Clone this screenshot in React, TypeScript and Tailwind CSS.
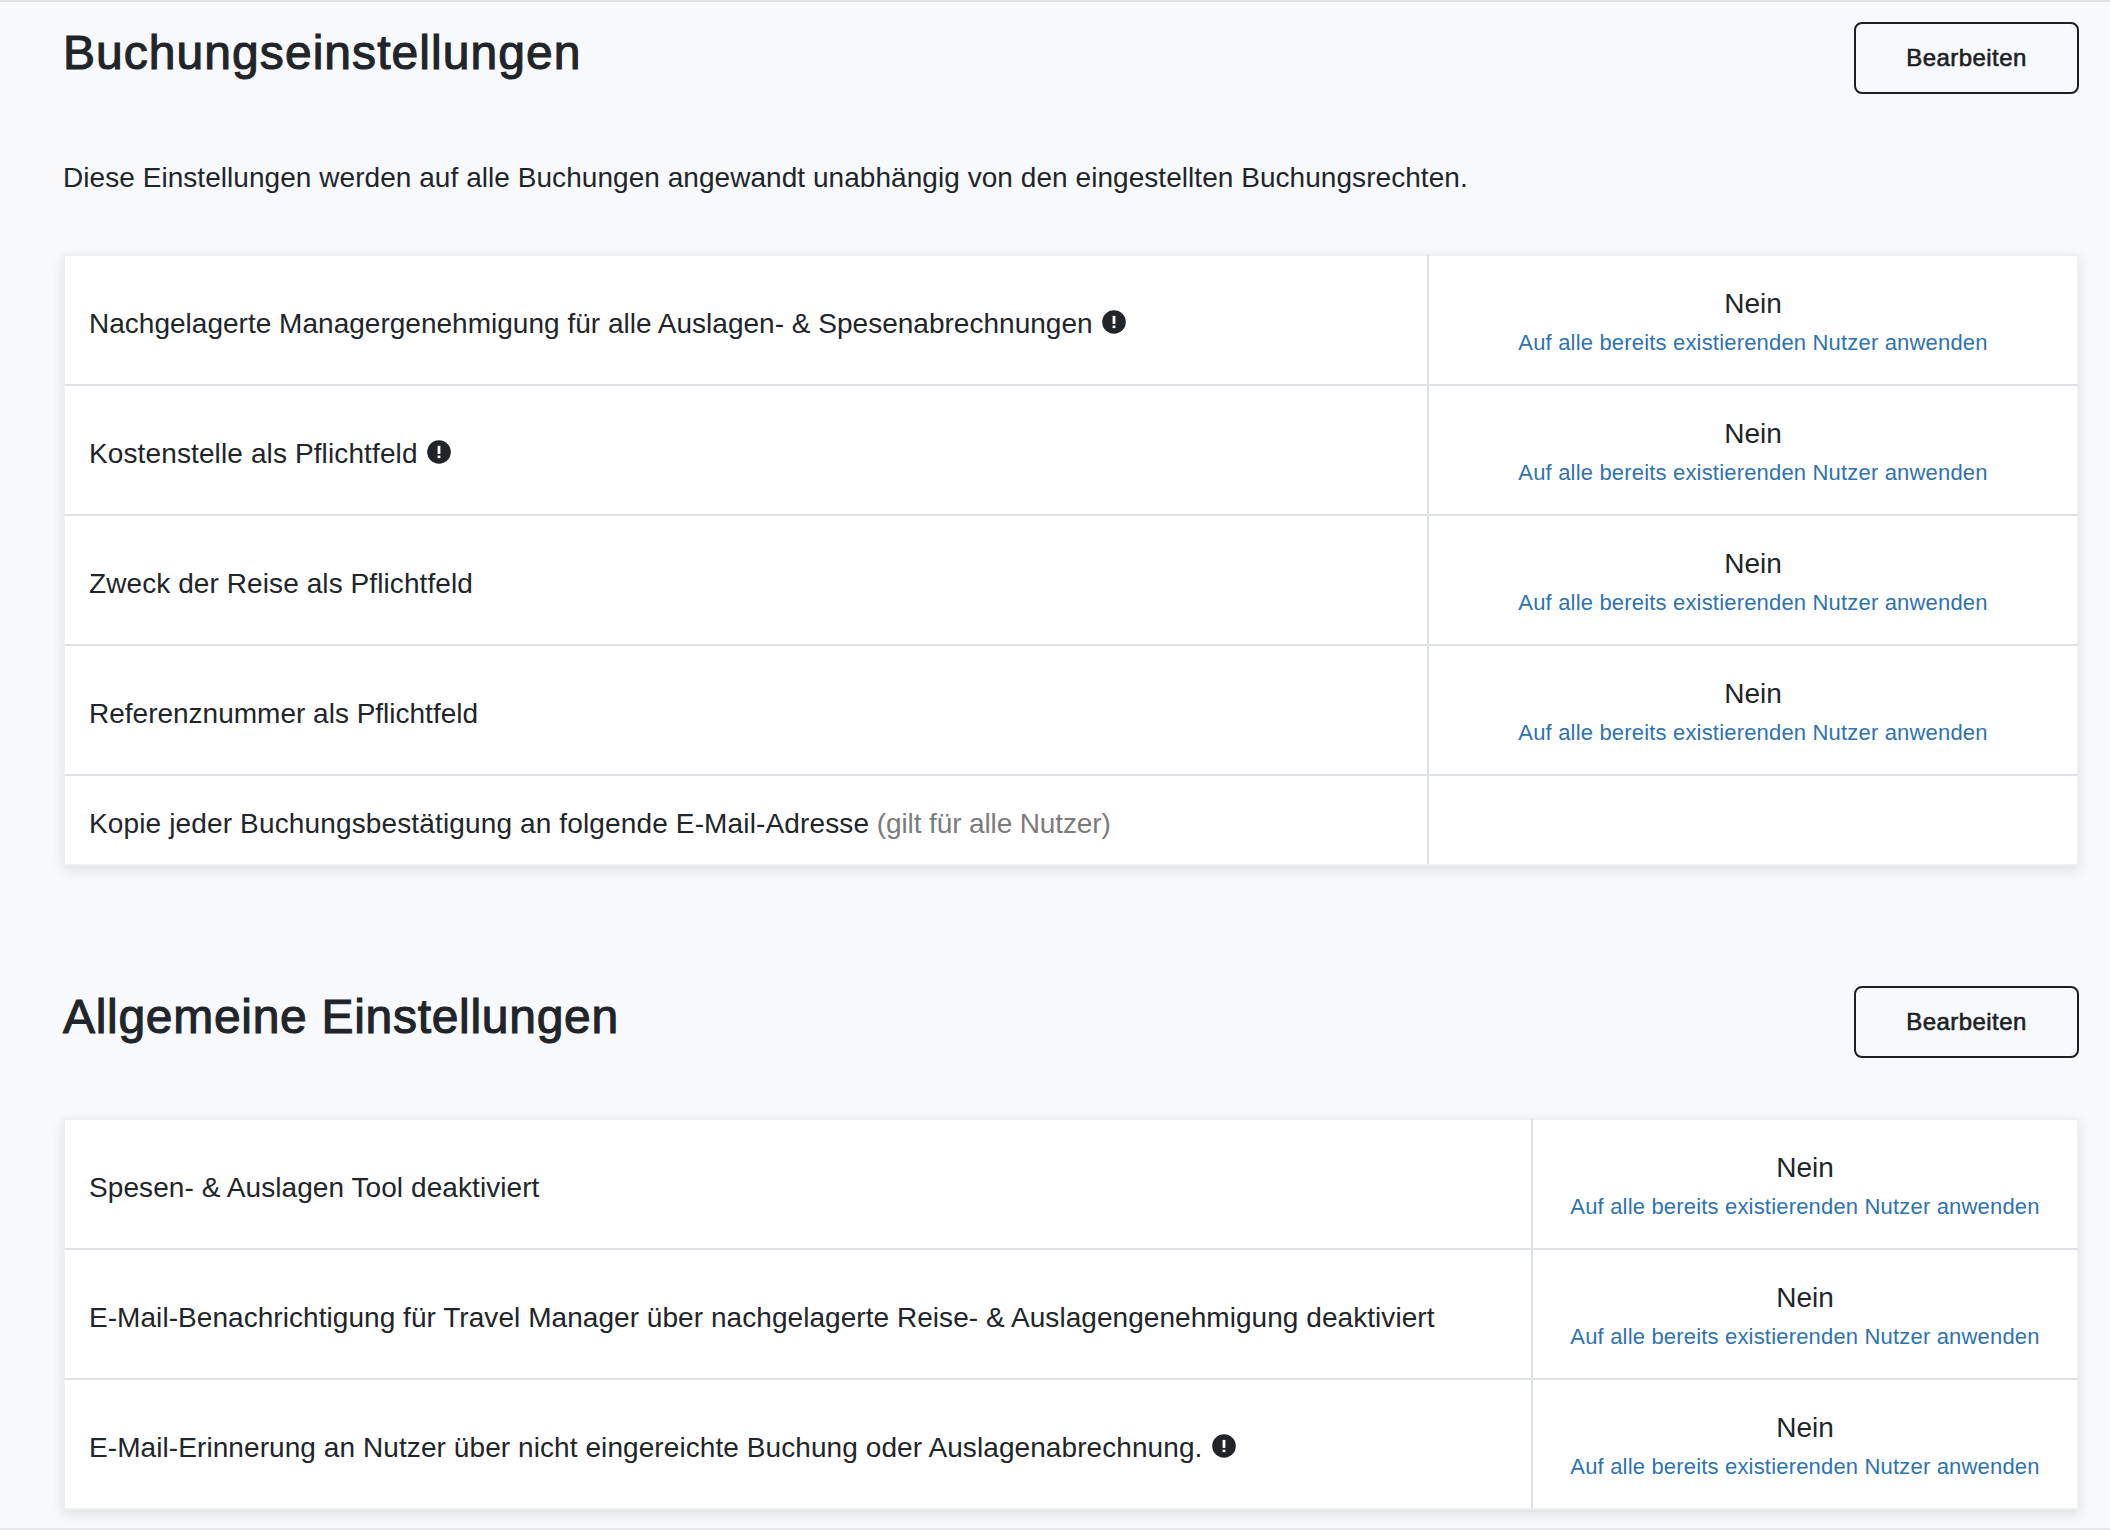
import React from "react";

type Row = { label: string; tracking: string; hint?: string; info?: boolean; value?: string };

const bookingRows: Row[] = [
  { label: "Nachgelagerte Managergenehmigung für alle Auslagen- & Spesenabrechnungen", tracking: "tracking-[0.015px]", info: true, value: "Nein" },
  { label: "Kostenstelle als Pflichtfeld", tracking: "tracking-[0.12px]", info: true, value: "Nein" },
  { label: "Zweck der Reise als Pflichtfeld", tracking: "tracking-[0.087px]", value: "Nein" },
  { label: "Referenznummer als Pflichtfeld", tracking: "tracking-normal", value: "Nein" },
  { label: "Kopie jeder Buchungsbestätigung an folgende E-Mail-Adresse", tracking: "tracking-[0.14px]", hint: "(gilt für alle Nutzer)" },
];

const generalRows: Row[] = [
  { label: "Spesen- & Auslagen Tool deaktiviert", tracking: "tracking-[0.077px]", value: "Nein" },
  { label: "E-Mail-Benachrichtigung für Travel Manager über nachgelagerte Reise- & Auslagengenehmigung deaktiviert", tracking: "tracking-[0.053px]", value: "Nein" },
  { label: "E-Mail-Erinnerung an Nutzer über nicht eingereichte Buchung oder Auslagenabrechnung.", tracking: "tracking-[0.08px]", info: true, value: "Nein" },
];

function InfoIcon() {
  return (
    <svg viewBox="0 0 24 24" className="mt-[6.5px] ml-[9.5px] size-6 shrink-0">
      <circle cx="12" cy="12" r="11.8" fill="#212529" />
      <rect x="10.6" y="5.9" width="2.8" height="8" fill="#fff" />
      <rect x="10.6" y="15.6" width="2.8" height="2.5" fill="#fff" />
    </svg>
  );
}

function SectionHeader({ title, tracking }: { title: string; tracking: string }) {
  return (
    <div className="flex items-start justify-between">
      <h2 className={`mt-0.5 text-[48px] leading-[58px] font-normal [-webkit-text-stroke:1.1px_#212529] ${tracking}`}>{title}</h2>
      <button className="h-[72px] w-[225px] rounded-[8px] border-2 border-[#1b2125] text-[24px] leading-[36px] tracking-[0.45px] text-[#1b2125] [-webkit-text-stroke:0.6px_#1b2125]">
        Bearbeiten
      </button>
    </div>
  );
}

function SettingsTable({ rows, valueWidth }: { rows: Row[]; valueWidth: string }) {
  return (
    <div className="border-b-2 border-[#eeefef] bg-white shadow-[0_4px_12px_rgba(0,0,0,0.11)]">
      {rows.map((row, i) => {
        const line = i === 0 ? "border-t-[#eeefef]" : "border-t-[#dee2e6]";
        return (
          <div key={row.label} className={`flex ${row.value ? "h-[130px]" : "h-[90px]"}`}>
            <div
              className={`flex flex-1 items-start border-t-2 border-l-2 border-l-[#eeefef] pl-6 leading-[42px] whitespace-pre ${line} ${
                row.value ? "pt-[47px]" : "pt-[27px]"
              }`}
            >
              <span className={row.tracking}>{row.label}</span>
              {row.hint && <span className="tracking-[-0.12px] text-[#7b7b7b]"> {row.hint}</span>}
              {row.info && <InfoIcon />}
            </div>
            <div
              className={`flex flex-col items-center border-x-2 border-t-2 border-r-[#eeefef] border-l-[#dee2e6] pt-[27px] leading-[42px] ${line} ${valueWidth}`}
            >
              {row.value && (
                <>
                  <span>{row.value}</span>
                  <a className="mt-px text-[22px] leading-[33px] tracking-[0.18px] text-[#2f72b0]">Auf alle bereits existierenden Nutzer anwenden</a>
                </>
              )}
            </div>
          </div>
        );
      })}
    </div>
  );
}

export default function App() {
  return (
    <main className="h-[1530px] w-[2110px] overflow-hidden border-y-2 border-t-[#e0e2e2] border-b-[#e6e6e8] bg-[#f8f9fd] pt-5 pr-[31px] pl-[63px] font-['Liberation_Sans',Arial,sans-serif] text-[28px] text-[#212529]">
      <SectionHeader title="Buchungseinstellungen" tracking="tracking-[1.05px]" />
      <p className="mt-[63px] mb-[55px] leading-[42px] tracking-[0.05px]">
        Diese Einstellungen werden auf alle Buchungen angewandt unabhängig von den eingestellten Buchungsrechten.
      </p>
      <SettingsTable rows={bookingRows} valueWidth="w-[652px]" />
      <div className="h-[120px]" />
      <SectionHeader title="Allgemeine Einstellungen" tracking="tracking-[0.7px]" />
      <div className="h-[60px]" />
      <SettingsTable rows={generalRows} valueWidth="w-[548px]" />
    </main>
  );
}
